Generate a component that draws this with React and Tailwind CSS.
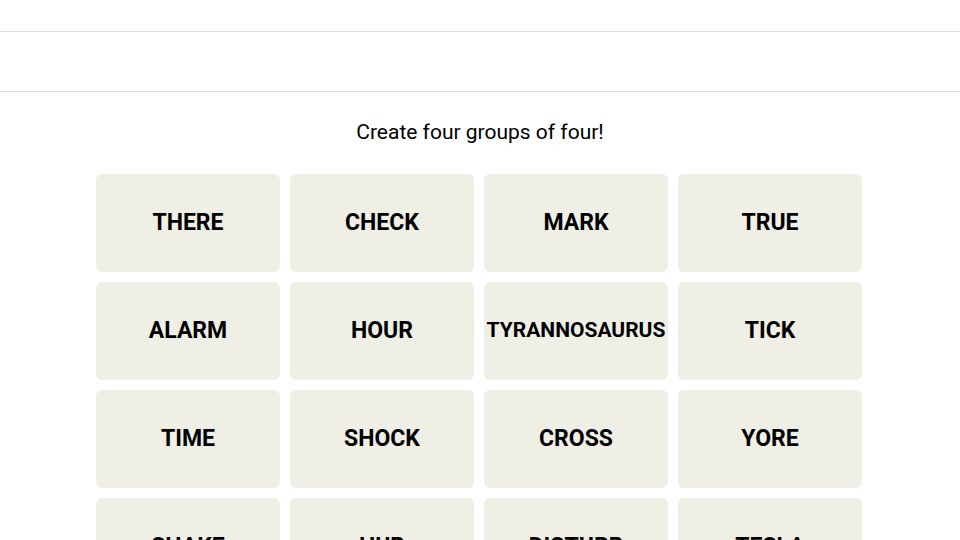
const words = [
  "THERE", "CHECK", "MARK", "TRUE",
  "ALARM", "HOUR", "TYRANNOSAURUS", "TICK",
  "TIME", "SHOCK", "CROSS", "YORE",
  "SHAKE", "HUB", "DISTURB", "TESLA",
];

const Tile = ({ word }) => {
  const long = word.length > 10;
  return (
    <button
      className={
        long
          ? "h-[98px] rounded-[6px] bg-[#efefe6] text-black font-bold text-[21px] flex items-center justify-center"
          : "h-[98px] rounded-[6px] bg-[#efefe6] text-black font-bold text-[23px] flex items-center justify-center"
      }
    >
      {word}
    </button>
  );
};

export default function App() {
  return (
    <div
      className="min-h-screen bg-white overflow-hidden"
      style={{ fontFamily: "Roboto, 'Liberation Sans', sans-serif" }}
    >
      <header className="h-[32px] border-b border-[#dedede]" />
      <div className="h-[60px] border-b border-[#dedede]" />

      <main className="flex flex-col items-center">
        <p className="mt-[28px] text-[21px] leading-[24px] text-black">
          Create four groups of four!
        </p>

        <div className="mt-[30px] grid grid-cols-4 gap-x-[10px] gap-y-[10px] w-[766px] ml-[-2px]">
          {words.map((w) => (
            <Tile key={w} word={w} />
          ))}
        </div>
      </main>
    </div>
  );
}
